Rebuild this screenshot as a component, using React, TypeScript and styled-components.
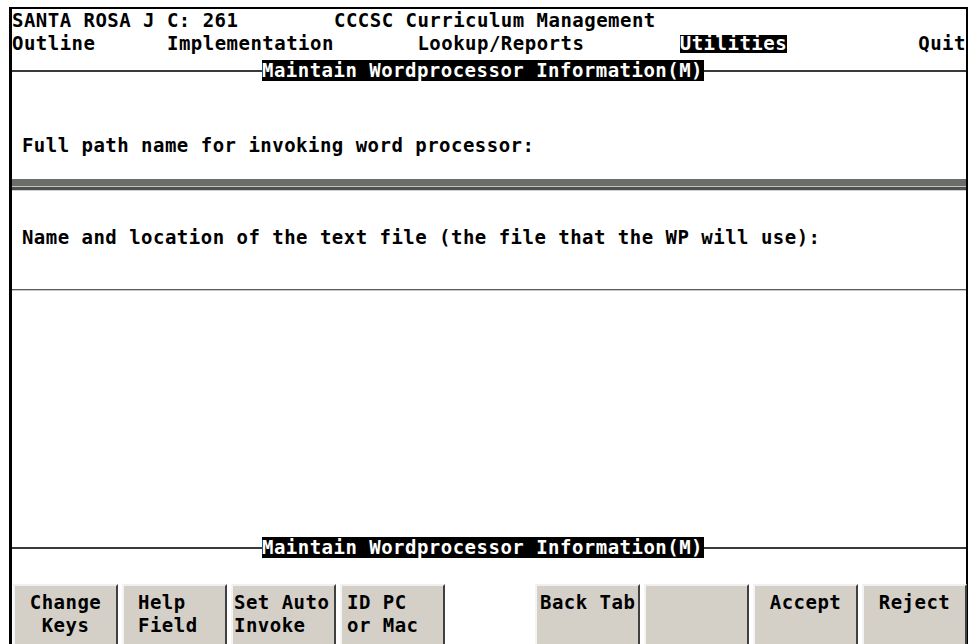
import styled, { createGlobalStyle } from "styled-components";

// one character cell of the 80-column terminal screen
const CELL = 11.925;

const GlobalStyle = createGlobalStyle`
  html, body {
    margin: 0;
    padding: 0;
    background: #ffffff;
  }
  body {
    font-family: "DejaVu Sans Mono", "Liberation Mono", monospace;
    color: #000000;
    font-kerning: none;
  }
`;

interface KeyDef {
  lines: string[];
  align?: "left" | "center";
  indent?: number;
}

const leftKeys: KeyDef[] = [
  { lines: ["Change", "Keys"], align: "center" },
  { lines: ["Help", "Field"], indent: 14 },
  { lines: ["Set Auto", "Invoke"], indent: 1 },
  { lines: ["ID PC", "or Mac"], indent: 5 },
];

const rightKeys: KeyDef[] = [
  { lines: ["Back Tab"], indent: 3 },
  { lines: [] },
  { lines: ["Accept"], align: "center" },
  { lines: ["Reject"], align: "center" },
];

const menu = [
  { label: "Outline", cells: 13 },
  { label: "Implementation", cells: 21 },
  { label: "Lookup/Reports", cells: 22 },
  { label: "Utilities", cells: 20, active: true },
  { label: "Quit", cells: 4 },
];

export default function App() {
  return (
    <>
      <GlobalStyle />
      <Page>
        <Screen>
          <HeaderRow>
            <Cell $cells={27}>SANTA ROSA J C: 261</Cell>
            <Cell $cells={53}>CCCSC Curriculum Management</Cell>
          </HeaderRow>
          <MenuBar>
            {menu.map((m) => (
              <Cell key={m.label} $cells={m.cells}>
                <MenuItem $active={m.active}>{m.label}</MenuItem>
              </Cell>
            ))}
          </MenuBar>

          <TitleRule $top={6}>
            <RuleLine $width={250} />
            <TitleLabel>Maintain Wordprocessor Information(M)</TitleLabel>
            <RuleLine />
          </TitleRule>

          <Prompt $top={54}>Full path name for invoking word processor:</Prompt>
          <InputBar $top={24} />
          <Prompt $top={36}>
            Name and location of the text file (the file that the WP will use):
          </Prompt>
          <Divider $top={42} />

          <TitleRule $top={246}>
            <RuleLine $width={250} />
            <TitleLabel>Maintain Wordprocessor Information(M)</TitleLabel>
            <RuleLine />
          </TitleRule>

          <KeyBar>
            <KeyGroup>
              {leftKeys.map((k, i) => (
                <FunctionKey key={i} $align={k.align} $indent={k.indent}>
                  {k.lines.map((l) => (
                    <KeyLine key={l}>{l}</KeyLine>
                  ))}
                </FunctionKey>
              ))}
            </KeyGroup>
            <KeyGroup $right>
              {rightKeys.map((k, i) => (
                <FunctionKey key={i} $align={k.align} $indent={k.indent}>
                  {k.lines.map((l) => (
                    <KeyLine key={l}>{l}</KeyLine>
                  ))}
                </FunctionKey>
              ))}
            </KeyGroup>
          </KeyBar>
        </Screen>
      </Page>
    </>
  );
}

const Page = styled.div`
  width: 970px;
  height: 644px;
  overflow: hidden;
  background: #ffffff;
`;

const Screen = styled.div`
  box-sizing: border-box;
  width: 959px;
  height: 637px;
  margin: 7px 0 0 9px;
  border-top: 2px solid #000;
  border-left: 3px solid #000;
  border-right: 2px solid #000;
  display: flex;
  flex-direction: column;
  font-size: 19px;
  font-weight: 700;
  letter-spacing: 0.48px;
  white-space: pre;
`;

const HeaderRow = styled.div`
  display: flex;
  height: 20px;
  line-height: 20px;
  padding-top: 1px;
`;

const MenuBar = styled.div`
  display: flex;
  height: 22px;
  margin-top: 2px;
`;

const Cell = styled.div<{ $cells: number }>`
  width: ${(p) => p.$cells * CELL}px;
  flex: none;
`;

const MenuItem = styled.span<{ $active?: boolean }>`
  display: inline-block;
  height: 19px;
  line-height: 17px;
  margin-top: 1px;
  background: ${(p) => (p.$active ? "#000" : "transparent")};
  color: ${(p) => (p.$active ? "#fff" : "#000")};
  text-decoration: ${(p) => (p.$active ? "underline" : "none")};
  text-decoration-thickness: 1px;
  text-underline-offset: 3px;
`;

const TitleRule = styled.div<{ $top: number }>`
  display: flex;
  align-items: center;
  height: 22px;
  margin-top: ${(p) => p.$top}px;
`;

const RuleLine = styled.div<{ $width?: number }>`
  height: 2px;
  background: #3a3a3a;
  ${(p) => (p.$width ? `width: ${p.$width}px; flex: none;` : "flex: 1;")}
`;

const TitleLabel = styled.div`
  background: #000;
  color: #fff;
  height: 21px;
  line-height: 21px;
  padding-right: 1px;
`;

const Prompt = styled.div<{ $top: number }>`
  height: 20px;
  line-height: 20px;
  padding-left: ${CELL - 2}px;
  margin-top: ${(p) => p.$top}px;
`;

const InputBar = styled.div<{ $top: number }>`
  margin-top: ${(p) => p.$top}px;
  height: 19px;
  background: #6b6d69;
  border-bottom: 1px solid #c4c4c4;
  box-shadow: 0 3px 0 #505050, 0 4px 0 #d0d0d0;
  margin-bottom: 4px;
`;

const Divider = styled.div<{ $top: number }>`
  margin-top: ${(p) => p.$top}px;
  height: 2px;
  background: #5c5c5c;
  border-bottom: 1px solid #c8c8c8;
`;

const KeyBar = styled.div`
  display: flex;
  margin-top: 26px;
  padding-left: 1px;
`;

const KeyGroup = styled.div<{ $right?: boolean }>`
  display: flex;
  gap: 4px;
  margin-left: ${(p) => (p.$right ? "auto" : "0")};
  margin-right: ${(p) => (p.$right ? "-1px" : "0")};
`;

const FunctionKey = styled.div<{ $align?: "left" | "center"; $indent?: number }>`
  box-sizing: border-box;
  width: 105px;
  height: 60px;
  padding: 5px 0 0 ${(p) => p.$indent ?? 0}px;
  background: #d4d0c8;
  border-top: 2px solid #efefef;
  border-left: 2px solid #f4f4f4;
  border-right: 2px solid #404040;
  text-align: ${(p) => p.$align ?? "left"};
`;

const KeyLine = styled.div`
  height: 23px;
  line-height: 23px;
`;
